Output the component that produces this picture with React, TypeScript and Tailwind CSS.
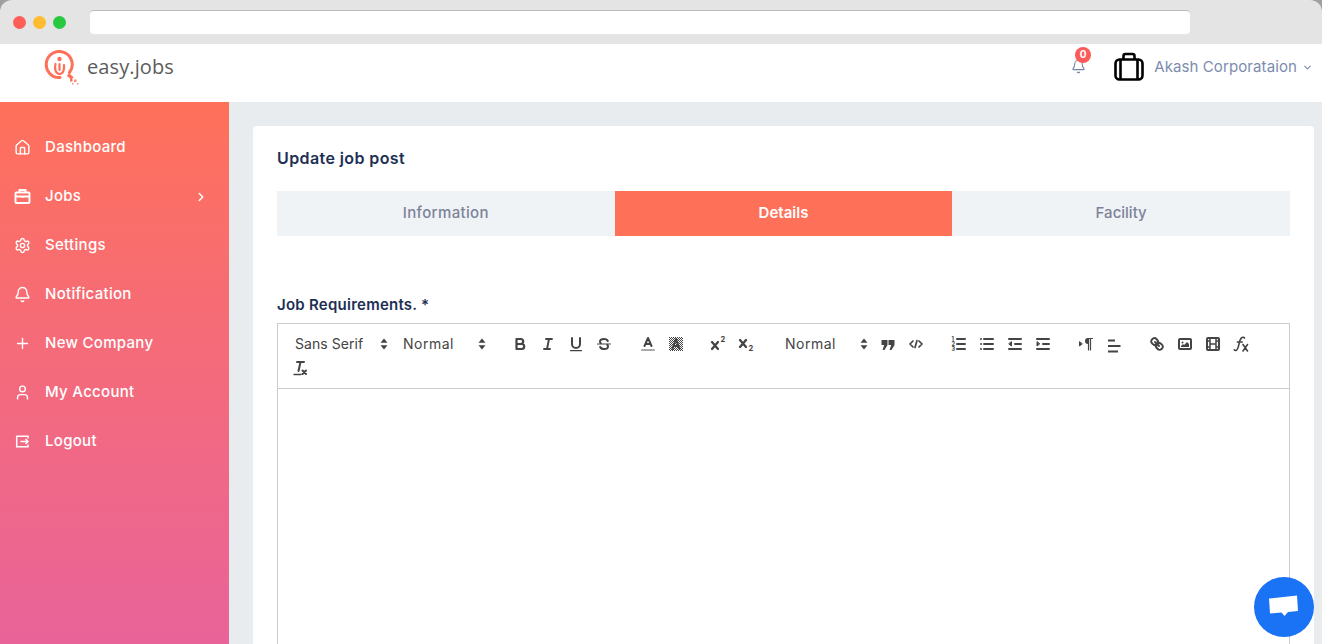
import { ReactNode } from 'react';
import { Bell, ChevronDown, ChevronRight, Home, Plus, Settings, User } from 'lucide-react';

const navItems = [
  { label: 'Dashboard', icon: <Home size={17} strokeWidth={2} /> },
  { label: 'Jobs', icon: <JobsIcon />, arrow: true },
  { label: 'Settings', icon: <Settings size={17} strokeWidth={2} /> },
  { label: 'Notification', icon: <Bell size={17} strokeWidth={2} /> },
  { label: 'New Company', icon: <Plus size={17} strokeWidth={2} /> },
  { label: 'My Account', icon: <User size={17} strokeWidth={2} /> },
  { label: 'Logout', icon: <LogoutIcon /> },
];

function JobsIcon() {
  return (
    <svg width="17" height="17" viewBox="0 0 17 17" fill="none" stroke="currentColor" strokeWidth="1.9">
      <rect x="1.500" y="4.500" width="14" height="10.500" rx="1" />
      <path d="M5.500 4.500V2h6v2.500M1.500 8.500h14M8.500 7.500v2.500" />
    </svg>
  );
}

function LogoutIcon() {
  return (
    <svg width="17" height="17" viewBox="0 0 17 17" fill="none" stroke="currentColor" strokeWidth="1.500">
      <path d="M14 5.500V3.200H2.700v10.600H14v-2.300" />
      <path d="M6.500 8.500h7.500M11.500 6l2.500 2.500-2.500 2.500" />
    </svg>
  );
}

function Logo() {
  return (
    <svg width="40" height="38" viewBox="0 0 40 38" fill="none">
      <path d="M25.500 22.500A13 13 0 1 0 16 27.500" stroke="#ff7059" strokeWidth="3" strokeLinecap="round" />
      <path d="M11.500 14c-1.500 5 .5 10 4 10s5-4 4.500-9" stroke="#ff7059" strokeWidth="2.200" strokeLinecap="round" />
      <path d="M15.500 14v6" stroke="#ff7059" strokeWidth="2.200" strokeLinecap="round" />
      <circle cx="15.500" cy="9" r="2.200" fill="#ff7059" />
      <path d="M24 24.500l4.500 4" stroke="#ff7059" strokeWidth="3.500" />
      <rect x="26" y="29" width="2.500" height="2.500" fill="#ff7059" />
      <rect x="30" y="29.500" width="2.500" height="2.500" fill="#ff8d7a" />
      <rect x="28" y="33" width="1.500" height="1.500" fill="#ff8d7a" />
      <rect x="33" y="33" width="1.500" height="1.500" fill="#ff8d7a" />
    </svg>
  );
}

function Tool({ children }: { children: ReactNode }) {
  return (
    <span className="flex h-6 w-7 shrink-0 items-center justify-center">
      <svg width="18" height="18" viewBox="0 0 18 18" fill="none" stroke="#444" strokeWidth="2" strokeLinecap="round" strokeLinejoin="round">
        {children}
      </svg>
    </span>
  );
}

function Picker({ label, className }: { label: string; className: string }) {
  return (
    <span className={`flex h-6 shrink-0 items-center justify-between pl-[9px] pr-[6px] text-[14px] text-[#444] ${className}`}>
      <span className="-mt-[2px]">{label}</span>
      <svg width="8" height="12" viewBox="0 0 8 12" fill="#444">
        <path d="M4 .5l3.500 4.200h-7zM4 11.500L.5 7.300h7z" />
      </svg>
    </span>
  );
}

function Toolbar() {
  return (
    <div className="flex flex-wrap border-b border-[#ccc] p-2">
      <Picker label="Sans Serif" className="w-[108px] tracking-[0.05px]" />
      <Picker label="Normal" className="w-[98px] tracking-[0.5px]" />
      <span className="w-[14px] shrink-0" />
      <Tool>
        <path d="M5.500 4h4.200a2.500 2.500 0 0 1 0 5H5.500zM5.500 9h5.200a2.500 2.500 0 0 1 0 5H5.500z" strokeWidth="2.200" />
      </Tool>
      <Tool>
        <path d="M7 4h6M5 14h6M8 14l2-10" strokeWidth="1.900" />
      </Tool>
      <Tool>
        <path d="M5 3v6a4 4 0 0 0 8 0V3" />
        <rect x="3" y="15" width="12" height="1.200" rx=".5" fill="#444" stroke="none" />
      </Tool>
      <Tool>
        <path d="M2.500 9h13" strokeWidth="1" />
        <path d="M12.800 6C12.300 4.800 10.800 4 9 4 6.800 4 5 5.100 5 6.500c0 .8.300 1.300.8 1.700M5.200 12c.5 1.200 2 2 3.800 2 2.200 0 4-1.100 4-2.500 0-.8-.3-1.300-.8-1.700" strokeWidth="2" />
      </Tool>
      <span className="w-4 shrink-0" />
      <Tool>
        <path d="M3 15h12" stroke="#aaa" />
        <path d="M5.500 11L9 3l3.500 8M6.400 9h5.200" strokeWidth="2" />
      </Tool>
      <Tool>
        <defs>
          <pattern id="hatch" width="2" height="2" patternUnits="userSpaceOnUse">
            <rect width="1" height="1" fill="#444" stroke="none" />
            <rect x="1" y="1" width="1" height="1" fill="#444" stroke="none" />
          </pattern>
        </defs>
        <rect x="2" y="2" width="14" height="14" fill="url(#hatch)" stroke="none" />
        <path d="M5.500 14L9 4l3.500 10M6.400 11h5.200" strokeWidth="2" />
      </Tool>
      <span className="w-[14px] shrink-0" />
      <Tool>
        <path d="M3 7l6 7M9 7l-6 7" strokeWidth="2.300" />
        <text x="11.500" y="7" fontSize="7.500" fontWeight="700" fill="#444" stroke="none">2</text>
      </Tool>
      <Tool>
        <path d="M3 5l6 7M9 5l-6 7" strokeWidth="2.300" />
        <text x="11.500" y="16" fontSize="7.500" fontWeight="700" fill="#444" stroke="none">2</text>
      </Tool>
      <span className="w-4 shrink-0" />
      <Picker label="Normal" className="w-[98px] tracking-[0.5px]" />
      <Tool>
        <path d="M2.500 5h6v5L5.500 15H3.600l1.600-5H2.500zM9.500 5h6v5L12.500 15h-1.900l1.600-5H9.500z" fill="#444" stroke="none" />
      </Tool>
      <Tool>
        <path d="M6 6L3 9l3 3M12 6l3 3-3 3M10 5.500l-2 7" strokeWidth="1.700" />
      </Tool>
      <span className="w-[15px] shrink-0" />
      <Tool>
        <path d="M7 4h8M7 9h8M7 14h8" />
        <text x="1.500" y="6" fontSize="5.500" fontWeight="700" fill="#444" stroke="none">1</text>
        <text x="1.500" y="11" fontSize="5.500" fontWeight="700" fill="#444" stroke="none">2</text>
        <text x="1.500" y="16" fontSize="5.500" fontWeight="700" fill="#444" stroke="none">3</text>
      </Tool>
      <Tool>
        <path d="M6 4h9M6 9h9M6 14h9M3 4h0M3 9h0M3 14h0" />
      </Tool>
      <Tool>
        <path d="M3 4h12M3 14h12M9 9h6" />
        <path d="M5.500 7v4L3 9z" fill="#444" strokeWidth="1" />
      </Tool>
      <Tool>
        <path d="M3 4h12M3 14h12M9 9h6" />
        <path d="M3 7v4l2.500-2z" fill="#444" strokeWidth="1" />
      </Tool>
      <span className="w-[15px] shrink-0" />
      <Tool>
        <path d="M2.500 7v4l2.500-2z" fill="#444" strokeWidth="1" />
        <path d="M11 3a3 3 0 0 0 0 6h1V3z" fill="#444" stroke="none" />
        <path d="M11.500 4v11M13.500 3.500v11.500M11 3.500h4.500" strokeWidth="1.200" />
      </Tool>
      <Tool>
        <path d="M3 5.500h7M3 11h12.500M3 16.500h10" strokeWidth="1.800" strokeLinecap="butt" />
      </Tool>
      <span className="w-[15px] shrink-0" />
      <Tool>
        <path d="M7 7l4 4" />
        <path d="M8.900 4.600a3.500 3.500 0 0 1 .36 4.680A3.500 3.500 0 0 1 4.580 8.900C3.190 7.500 2.040 6.400 4.220 4.220S7.500 3.190 8.900 4.600z" />
        <path d="M13.420 9.100a3.500 3.500 0 0 0-4.680-.36 3.500 3.500 0 0 0 .36 4.680c1.400 1.390 2.500 2.540 4.680.36s1.030-3.280-.36-4.680z" />
      </Tool>
      <Tool>
        <rect x="3" y="4" width="12" height="10" rx="1" />
        <circle cx="6.500" cy="7.500" r="1" fill="#444" stroke="none" />
        <path d="M5 12v-1l2-2 1 1 3-3 2 2v3z" fill="#444" stroke="none" />
      </Tool>
      <Tool>
        <rect x="3" y="3" width="12" height="12" rx="1" />
        <path d="M6 3v12M12 3v12M6 9h6M3 6h3M3 12h3M12 6h3M12 12h3" strokeWidth="1.500" strokeLinecap="butt" />
      </Tool>
      <Tool>
        <path d="M12.500 3c-.5-.9-2-1.100-3-.2C8 4.200 7.500 6.500 7 9c-.6 3-1.100 6-3 6.500-.8.200-1.400-.2-1.800-.7" strokeWidth="1.600" />
        <path d="M5.300 7h5" strokeWidth="1.400" />
        <path d="M11 9.500l4.500 6.500M15.500 9.500L11 16" strokeWidth="1.600" />
      </Tool>
      <Tool>
        <path d="M6 3h7M9.500 3l-2 9" strokeWidth="2" />
        <path d="M3 15.500h7" strokeWidth="1.300" />
        <path d="M11.500 11.500l3.500 3.500M15 11.500L11.500 15" strokeWidth="2" />
      </Tool>
    </div>
  );
}

export default function App() {
  return (
    <div className="relative h-[644px] w-[1322px] overflow-hidden bg-[#a0a0a0] font-['Inter',sans-serif]">
      <div className="flex h-11 items-center rounded-t-[12px] bg-[#e4e4e4] pl-[13px] pr-[132px]">
        <span className="h-[13px] w-[13px] rounded-full bg-[#ff5f57]" />
        <span className="ml-[7px] h-[13px] w-[13px] rounded-full bg-[#febc2e]" />
        <span className="ml-[7px] h-[13px] w-[13px] rounded-full bg-[#28c840]" />
        <div className="ml-[24px] h-6 flex-1 rounded-[4px] border-t border-[#bbb] bg-white" />
      </div>

      <header className="flex h-[58px] items-center bg-white pb-3">
        <div className="ml-[44px] mt-1">
          <Logo />
        </div>
        <span className="ml-[3px] font-['Open_Sans',sans-serif] text-[20px] leading-none tracking-[0.1px] text-[#5c5c5c]">easy.jobs</span>
        <div className="ml-auto flex items-center">
          <div className="relative mb-[2px] mr-[28px] text-[#7384a6]">
            <Bell size={15} strokeWidth={1.700} />
            <span className="absolute -right-[5px] -top-[12px] flex h-4 w-4 items-center justify-center rounded-full bg-[#ff5a5a] text-[10px] font-bold text-white">0</span>
          </div>
          <svg width="30" height="30" viewBox="0 0 30 30" fill="none" stroke="#000" strokeWidth="2.600">
            <rect x="1.500" y="7.500" width="27" height="20" rx="4" />
            <path d="M9.500 7.500V4a2 2 0 0 1 2-2h7a2 2 0 0 1 2 2v3.500M6.500 7.500v20M23.500 7.500v20" />
          </svg>
          <span className="ml-[10px] mt-[1px] text-[15px] tracking-[0.1px] text-[#7c8cae]">Akash Corporataion</span>
          <ChevronDown size={11} strokeWidth={2.500} className="ml-[5px] mr-[9px] mt-[1px] text-[#7c8cae]" />
        </div>
      </header>

      <div className="flex h-[542px]">
        <aside className="w-[229px] shrink-0 bg-gradient-to-b from-[#ff7059] to-[#e96399] pt-[21px] text-white">
          {navItems.map(item => (
            <div key={item.label} className="flex h-[49px] items-center pl-[14px] pr-[21px]">
              <span className="flex w-[31px] shrink-0">{item.icon}</span>
              <span className="text-[15px] font-medium tracking-[0.3px]">{item.label}</span>
              {item.arrow && <ChevronRight size={14} strokeWidth={2.500} className="ml-auto" />}
            </div>
          ))}
        </aside>

        <main className="flex-1 bg-[#e9ecef] pl-6 pr-2 pt-6">
          <div className="h-[600px] rounded-[4px] bg-white px-6 pt-6">
            <h1 className="text-[16px] font-semibold leading-[17px] tracking-[0.4px] text-[#1e2f55]">Update job post</h1>
            <div className="mt-6 grid h-[45px] grid-cols-3 bg-[#f0f3f6] text-[15px] font-medium">
              <div className="flex items-center justify-center tracking-[0.35px] text-[#7d8299]">Information</div>
              <div className="flex items-center justify-center bg-[#ff7059] font-semibold text-white">Details</div>
              <div className="flex items-center justify-center text-[#7d8299]">Facility</div>
            </div>
            <label className="mt-[60px] block text-[15px] font-semibold leading-[18px] tracking-[0.25px] text-[#1e2f55]">Job Requirements. *</label>
            <div className="mt-[9px] h-[400px] border border-[#ccc]">
              <Toolbar />
            </div>
          </div>
        </main>
      </div>

      <div className="absolute bottom-[7px] right-[8px] flex h-[60px] w-[60px] items-center justify-center rounded-full bg-[#1a73f5]">
        <svg width="30" height="24" viewBox="0 0 30 24" fill="#fff">
          <path d="M0 3.500L28 0.500l1 15.500-10 1-3.500 4-3-3.500L1 18.500z" />
        </svg>
      </div>
    </div>
  );
}
